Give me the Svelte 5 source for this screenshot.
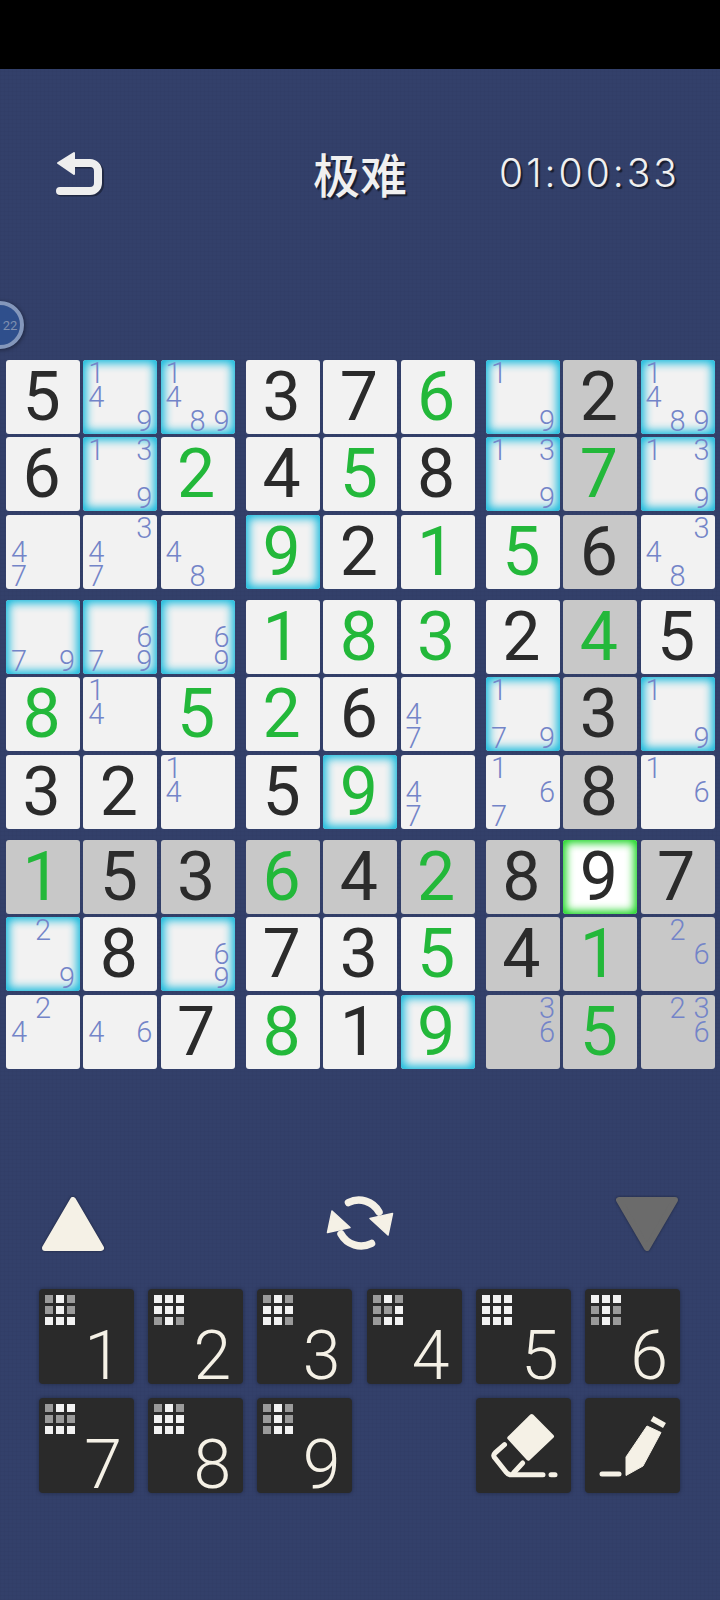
<script lang="ts">
  // number = given, string = player's entry (green), array = pencil notes
  const rows: any[][] = [
    [5, [1, 4, 9], [1, 4, 8, 9], 3, 7, "6", [1, 9], 2, [1, 4, 8, 9]],
    [6, [1, 3, 9], "2", 4, "5", 8, [1, 3, 9], "7", [1, 3, 9]],
    [[4, 7], [3, 4, 7], [4, 8], "9", 2, "1", "5", 6, [3, 4, 8]],
    [[7, 9], [6, 7, 9], [6, 9], "1", "8", "3", 2, "4", 5],
    ["8", [1, 4], "5", "2", 6, [4, 7], [1, 7, 9], 3, [1, 9]],
    [3, 2, [1, 4], 5, "9", [4, 7], [1, 6, 7], 8, [1, 6]],
    ["1", 5, 3, "6", 4, "2", 8, 9, 7],
    [[2, 9], 8, [6, 9], 7, 3, "5", 4, "1", [2, 6]],
    [[2, 4], [4, 6], 7, "8", 1, "9", [3, 6], "5", [2, 3, 6]]
  ];

  const selRow = 6;
  const selCol = 7;
  const digit = 9;
  const slots = [1, 2, 3, 4, 5, 6, 7, 8, 9];

  function cellAt(block: number, i: number) {
    const r = Math.floor(block / 3) * 3 + Math.floor(i / 3);
    const c = (block % 3) * 3 + (i % 3);
    const v = rows[r][c];
    const notes = Array.isArray(v) ? v : null;
    const peer =
      r === selRow || c === selCol || (Math.floor(r / 3) === 2 && Math.floor(c / 3) === 2);
    const selected = r === selRow && c === selCol;
    const hit = notes ? notes.includes(digit) : Number(v) === digit;
    return {
      notes,
      value: notes ? null : String(v),
      entry: typeof v === "string",
      peer: peer && !selected,
      selected,
      glow: hit && !selected && !peer
    };
  }

  // which 3x3 blocks already hold a given digit
  function blocksWith(n: number) {
    const found = Array(9).fill(false);
    rows.forEach((row, r) =>
      row.forEach((v, c) => {
        if (!Array.isArray(v) && Number(v) === n) {
          found[Math.floor(r / 3) * 3 + Math.floor(c / 3)] = true;
        }
      })
    );
    return found;
  }
</script>

<div class="page">
  <div class="status"></div>

  <header class="top">
    <button class="back" aria-label="返回">
      <svg viewBox="0 0 50 46" width="50" height="46">
        <path class="shadow-line" d="M17 12.500H35a8 8 0 0 1 8 8v12a8 8 0 0 1-8 8H4" />
        <path class="line" d="M16 12H34a8 8 0 0 1 8 8v12a8 8 0 0 1-8 8H4" />
        <polygon class="head" points="2,12 18,2 18,23" />
      </svg>
    </button>
    <h1>极难</h1>
    <div class="timer">01:00:33</div>
  </header>

  <div class="badge"><span>22</span></div>

  <main class="board">
    {#each slots as _, b}
      <div class="block">
        {#each slots as _, i}
          {@const cell = cellAt(b, i)}
          <div
            class="cell"
            class:peer={cell.peer}
            class:glow={cell.glow}
            class:selected={cell.selected}
          >
            {#if cell.notes}
              <div class="notes">
                {#each slots as n}
                  <span>{cell.notes.includes(n) ? n : ""}</span>
                {/each}
              </div>
            {:else}
              <span class="value" class:entry={cell.entry}>{cell.value}</span>
            {/if}
          </div>
        {/each}
      </div>
    {/each}
  </main>

  <div class="tools">
    <svg viewBox="0 0 66 60" width="66" height="60">
      <polygon class="tri up" points="33,5 61,53 5,53" />
    </svg>
    <svg class="sync" viewBox="0 0 80 80" width="80" height="80">
      <path d="M28.500 17.500A23 23 0 0 1 59 27" />
      <polygon points="50,33.500 72.500,28.500 68,50" />
      <path d="M51.500 58.500A23 23 0 0 1 21 49" />
      <polygon points="30,42.500 7.500,47.500 12,26" />
    </svg>
    <svg viewBox="0 0 66 60" width="66" height="60">
      <polygon class="tri down" points="5,5 61,5 33,53" />
    </svg>
  </div>

  <section class="keys">
    {#each slots as n}
      <button class="key">
        <span class="mini">
          {#each blocksWith(n) as on}
            <i class:on></i>
          {/each}
        </span>
        <span class="num">{n}</span>
      </button>
    {/each}

    <button class="key tool eraser" aria-label="擦除">
      <svg viewBox="0 0 95 95" width="95" height="95">
        <polygon class="fill" points="55.700,18 76,38.300 52.300,60.700 33.300,40" />
        <path class="stroke" d="M28.500 46.700 19 55a3.500 3.500 0 0 0-.5 4.500L30 74a7 7 0 0 0 4 2.700H67" />
        <path class="stroke" d="M46.700 65 37.500 75" />
        <path class="stroke" d="M75 76.700h4" />
      </svg>
    </button>
    <button class="key tool" aria-label="笔记">
      <svg viewBox="0 0 95 95" width="95" height="95">
        <path class="stroke cap" d="M67 20.500 79.500 27.500" />
        <polygon class="fill pen" points="62,28 76,34.500 58,68 41,77.500 41,59" />
        <path class="stroke" d="M17 76H34" />
      </svg>
    </button>
  </section>
</div>

<style>
  :global(body) {
    margin: 0;
    background: #33406a;
  }

  .page {
    position: relative;
    width: 720px;
    height: 1600px;
    overflow: hidden;
    background-color: #33406a;
    background-image:
      repeating-linear-gradient(0deg, rgba(0, 0, 0, 0.025) 0 1px, transparent 1px 4px),
      repeating-linear-gradient(90deg, rgba(0, 0, 0, 0.025) 0 1px, transparent 1px 4px);
    font-family: Roboto, "Noto Sans CJK SC", sans-serif;
  }

  .status {
    height: 69px;
    background: #000;
  }

  .top {
    display: grid;
    grid-template-columns: 1fr auto 1fr;
    align-items: center;
    box-sizing: border-box;
    height: 291px;
    padding: 68px 40px 152px 40px;
    color: #f0f0f0;
    text-shadow: 2px 2px 1px rgba(0, 0, 0, 0.55);
  }

  .back {
    width: 50px;
    height: 46px;
    margin: 2px 0 0 16px;
    padding: 0;
    border: 0;
    background: none;
  }

  .back .line,
  .back .shadow-line {
    fill: none;
    stroke: #eeeeee;
    stroke-width: 8;
    stroke-linecap: round;
  }

  .back .shadow-line {
    stroke: rgba(0, 0, 0, 0.35);
    transform: translate(1px, 1px);
  }

  .back .head {
    fill: #eeeeee;
    stroke: #eeeeee;
    stroke-width: 2;
    stroke-linejoin: round;
  }

  h1 {
    margin: 0;
    font-family: "Noto Sans CJK SC", sans-serif;
    font-size: 47px;
    font-weight: 500;
    line-height: 60px;
  }

  .timer {
    justify-self: end;
    font-family: Inter, sans-serif;
    font-size: 39px;
    font-weight: 300;
    letter-spacing: 3px;
    line-height: 60px;
  }

  .badge {
    position: absolute;
    left: -24px;
    top: 301px;
    display: flex;
    align-items: center;
    justify-content: center;
    box-sizing: border-box;
    width: 48px;
    height: 48px;
    border: 4px solid #8497bb;
    border-radius: 50%;
    background: #2f4f8c;
    box-shadow: 1px 1px 4px rgba(0, 0, 0, 0.4);
  }

  .badge span {
    margin-left: 20px;
    color: #7f8fb0;
    font-size: 13px;
  }

  .board {
    display: grid;
    grid-template-columns: repeat(3, 228.660px);
    gap: 11.340px;
    padding-left: 6px;
  }

  .block {
    display: grid;
    grid-template-columns: repeat(3, 74px);
    grid-auto-rows: 74px;
    gap: 3.330px;
  }

  .cell {
    display: flex;
    align-items: center;
    justify-content: center;
    border-radius: 3px;
    background: #f2f2f2;
  }

  .cell.peer {
    background: #c8c8c8;
  }

  .cell.glow {
    box-shadow: inset 0 0 10px 3px #0fb8dc;
  }

  .cell.selected {
    background: #ffffff;
    box-shadow: inset 0 0 9px 3px #16d41e;
  }

  .value {
    margin-right: 3px;
    color: #2b2b2b;
    font-size: 68px;
    line-height: 74px;
  }

  .value.entry {
    color: #23b83a;
  }

  .notes {
    display: grid;
    grid-template-columns: repeat(3, 24px);
    grid-auto-rows: 24px;
    width: 72px;
    color: #7384c8;
    font-size: 29px;
    font-weight: 300;
    line-height: 24px;
    text-align: center;
  }

  .tools {
    display: flex;
    align-items: center;
    justify-content: space-between;
    box-sizing: border-box;
    height: 60px;
    margin-top: 126px;
    padding: 0 40px;
  }

  .tri {
    stroke-width: 6;
    stroke-linejoin: round;
    filter: drop-shadow(0 0 1.500px rgba(0, 0, 0, 0.4));
  }

  .tri.up {
    fill: #f5f1e6;
    stroke: #f5f1e6;
  }

  .tri.down {
    fill: #6b6b6b;
    stroke: #6b6b6b;
  }

  .sync path {
    fill: none;
    stroke: #f5f1e6;
    stroke-width: 7.500;
    stroke-linecap: round;
  }

  .sync polygon {
    fill: #f5f1e6;
    stroke: #f5f1e6;
    stroke-width: 1.500;
    stroke-linejoin: round;
  }

  .keys {
    display: grid;
    grid-template-columns: repeat(6, 95px);
    grid-auto-rows: 95px;
    gap: 14.200px;
    margin-top: 34px;
    padding-left: 39px;
  }

  .key {
    position: relative;
    display: block;
    padding: 0;
    border: 0;
    border-radius: 4px;
    background: #2a2a2a;
    box-shadow: 0 0 4px rgba(0, 0, 0, 0.35);
    color: #f5f1e6;
    font-family: inherit;
  }

  .key.eraser {
    grid-column: 5;
  }

  .mini {
    position: absolute;
    left: 6px;
    top: 6px;
    display: grid;
    grid-template-columns: repeat(3, 8px);
    grid-auto-rows: 8px;
    gap: 3px;
  }

  .mini i {
    background: #9a9a9a;
  }

  .mini i.on {
    background: #f2f2f2;
  }

  .num {
    position: absolute;
    right: 12px;
    bottom: -9px;
    font-size: 68px;
    font-weight: 300;
    line-height: 74px;
  }

  .tool svg {
    display: block;
  }

  .fill {
    fill: #f5f1e6;
    stroke: #f5f1e6;
    stroke-width: 4;
    stroke-linejoin: round;
  }

  .pen {
    stroke-width: 1;
  }

  .stroke {
    fill: none;
    stroke: #f5f1e6;
    stroke-width: 5;
    stroke-linecap: round;
    stroke-linejoin: round;
  }

  .cap {
    stroke-width: 6;
    stroke-linecap: butt;
  }
</style>
